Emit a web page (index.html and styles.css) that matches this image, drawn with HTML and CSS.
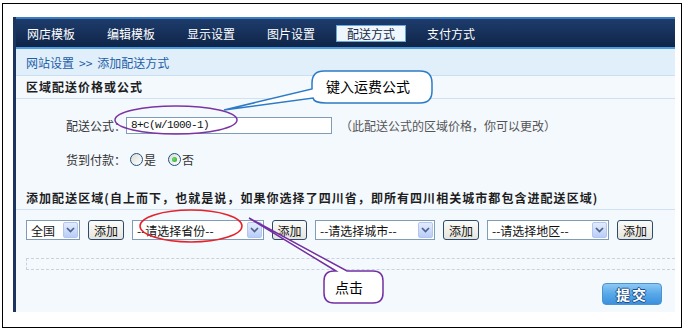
FILE: index.html
```html
<!DOCTYPE html>
<html lang="zh-CN">
<head>
<meta charset="utf-8">
<title>添加配送方式</title>
<link rel="stylesheet" href="styles.css">
</head>
<body>
<div class="frame">
  <div class="panel">
    <nav class="nav">
      <span class="nav-item">网店模板</span>
      <span class="nav-item">编辑模板</span>
      <span class="nav-item">显示设置</span>
      <span class="nav-item">图片设置</span>
      <span class="nav-item active">配送方式</span>
      <span class="nav-item">支付方式</span>
    </nav>
    <div class="crumb"><span>网站设置</span><span class="sep">&gt;&gt;</span><span>添加配送方式</span></div>
    <div class="sec-head">区域配送价格或公式</div>
    <div class="form">
      <div class="row row-formula">
        <span class="label">配送公式：</span>
        <div class="input">8+c(w/1000-1)</div>
        <span class="hint">（此配送公式的区域价格，你可以更改）</span>
      </div>
      <div class="row row-cod">
        <span class="label">货到付款：</span>
        <span class="radio"></span><span class="opt">是</span>
        <span class="radio on"></span><span class="opt">否</span>
      </div>
    </div>
    <div class="sec-head sec2">添加配送区域(自上而下，也就是说，如果你选择了四川省，即所有四川相关城市都包含进配送区域)</div>
    <div class="region-row">
      <div class="select w1"><span class="val">全国</span><span class="arrow"><svg width="9" height="6" viewBox="0 0 9 6"><path d="M1 1 L4.5 4.5 L8 1" stroke="#4d6185" stroke-width="1.7" fill="none"/></svg></span></div>
      <button class="add">添加</button>
      <div class="select w2"><span class="val">--请选择省份--</span><span class="arrow"><svg width="9" height="6" viewBox="0 0 9 6"><path d="M1 1 L4.5 4.5 L8 1" stroke="#4d6185" stroke-width="1.7" fill="none"/></svg></span></div>
      <button class="add b2">添加</button>
      <div class="select w3"><span class="val">--请选择城市--</span><span class="arrow"><svg width="9" height="6" viewBox="0 0 9 6"><path d="M1 1 L4.5 4.5 L8 1" stroke="#4d6185" stroke-width="1.7" fill="none"/></svg></span></div>
      <button class="add">添加</button>
      <div class="select w4"><span class="val">--请选择地区--</span><span class="arrow"><svg width="9" height="6" viewBox="0 0 9 6"><path d="M1 1 L4.5 4.5 L8 1" stroke="#4d6185" stroke-width="1.7" fill="none"/></svg></span></div>
      <button class="add">添加</button>
    </div>
    <div class="dashed"></div>
    <div class="actions"><button class="submit">提交</button></div>
  </div>
</div>
<svg class="annot" width="688" height="330" viewBox="0 0 688 330">
  <ellipse cx="176" cy="120" rx="61" ry="14" fill="none" stroke="#7b35a3" stroke-width="1.5"/>
  <ellipse cx="191" cy="226" rx="51" ry="16" fill="none" stroke="#e3232b" stroke-width="1.5"/>
  <path d="M324,71 H420 Q432,71 432,83 V91 Q432,103 420,103 H326 Q314,103 313,98 L224,110 L312,89 V83 Q312,71 324,71 Z" fill="#fff" stroke="#2b7bc6" stroke-width="1.5"/>
  <text x="326" y="92" class="bubble-text">键入运费公式</text>
  <path d="M336,271 L249,218 L347,271 H373 Q383,271 383,281 V293 Q383,303 373,303 H334 Q324,303 324,293 V281 Q324,271 334,271 Z" fill="#fff" stroke="#7230a2" stroke-width="1.5"/>
  <text x="335" y="293" class="bubble-text">点击</text>
</svg>
</body>
</html>
```

FILE: styles.css
```css
* { box-sizing: border-box; }

body {
  margin: 0;
  position: relative;
  width: 688px;
  height: 330px;
  overflow: hidden;
  background: #fff;
  font-family: "Noto Sans CJK SC", "Noto Sans", sans-serif;
  font-size: 12px;
  color: #222;
}

.frame {
  margin: 3px 0 0 2px;
  width: 680px;
  height: 325px;
  border: 1px solid #000;
  padding: 13px 0 0 10px;
}

.panel {
  width: 662px;
  height: 295px;
  background: #f4f9fe;
  border-left: 3px solid #1c3560;
  overflow: hidden;
}

.nav {
  height: 32px;
  border-top: 2px solid #3d7cc0;
  border-bottom: 2px solid #4e9de2;
  background: linear-gradient(#1d3c6c, #0f2548);
  display: flex;
  align-items: center;
  gap: 10px;
}

.nav-item {
  height: 17px;
  line-height: 15px;
  padding: 0 10px;
  border: 1px solid transparent;
  color: #fff;
  white-space: nowrap;
}

.nav-item.active {
  background: #eef6fe;
  border-color: #6aa6dc;
  color: #1a2a40;
}

.crumb {
  height: 27px;
  line-height: 27px;
  padding-left: 10px;
  background: #e1effb;
  border-bottom: 1px solid #cadff2;
  color: #1e5ea6;
}

.crumb .sep {
  margin: 0 5px;
}

.sec-head {
  height: 23px;
  line-height: 22px;
  padding-left: 10px;
  border-bottom: 1px solid #cfe1f2;
  font-weight: bold;
  letter-spacing: 1px;
  color: #1e1e1e;
  white-space: nowrap;
}

.form {
  padding-left: 50px;
}

.row {
  display: flex;
  align-items: center;
}

.label {
  color: #333;
}

.row-formula {
  margin-top: 18px;
  height: 17px;
}

.input {
  width: 206px;
  height: 17px;
  border: 1px solid #7f9db9;
  background: #fff;
  padding-left: 4px;
  line-height: 15px;
  font-family: "Liberation Mono", monospace;
  font-size: 11px;
  letter-spacing: -0.6px;
  color: #111;
}

.hint {
  margin-left: 8px;
  color: #555;
}

.row-cod {
  margin-top: 15px;
  height: 20px;
}

.radio {
  width: 13px;
  height: 13px;
  border-radius: 50%;
  border: 1px solid #1c5180;
  background: linear-gradient(135deg, #dcdcd6, #fff);
  margin-left: 4px;
  margin-right: 1px;
  position: relative;
}

.radio + .opt + .radio {
  margin-left: 12px;
}

.radio.on::after {
  content: "";
  position: absolute;
  left: 3px;
  top: 3px;
  width: 5px;
  height: 5px;
  border-radius: 50%;
  background: radial-gradient(circle at 40% 40%, #6fdc6f, #21a121);
}

.opt {
  color: #333;
}

.sec2 {
  margin-top: 17px;
  height: 24px;
  line-height: 23px;
  letter-spacing: 1.05px;
}

.region-row {
  margin-top: 10px;
  padding-left: 10px;
  height: 20px;
  display: flex;
  gap: 8px;
}

.select {
  height: 20px;
  border: 1px solid #7f9db9;
  background: #fff;
  display: flex;
  align-items: center;
  justify-content: space-between;
  padding: 0 1px 0 4px;
  color: #111;
  white-space: nowrap;
}

.w1 { width: 54px; }
.w2 { width: 132px; }
.w3 { width: 120px; }
.w4 { width: 122px; }

.arrow {
  width: 15px;
  height: 16px;
  border: 1px solid #b4c6ee;
  border-radius: 2px;
  background: linear-gradient(#e3ecfe, #b9cdf8);
  display: flex;
  align-items: center;
  justify-content: center;
}

.add {
  width: 36px;
  height: 20px;
  padding: 0;
  border: 1px solid #2b4a6e;
  border-radius: 3px;
  background: linear-gradient(#fbfbf8, #e6e4dc);
  font-family: inherit;
  font-size: 12px;
  line-height: 17px;
  color: #111;
}

.add.b2 { width: 35px; }

.dashed {
  margin-top: 18px;
  margin-left: 10px;
  height: 12px;
  border: 1px dashed #c9d2dc;
  border-right: none;
}

.actions {
  margin-top: 13px;
  display: flex;
  justify-content: flex-end;
  padding-right: 13px;
}

.submit {
  width: 60px;
  height: 22px;
  padding: 0;
  border: 1px solid #4a94d4;
  border-radius: 4px;
  background: linear-gradient(#8dc8f4, #56a8e8 50%, #3d91dc);
  font-family: inherit;
  font-size: 14px;
  font-weight: bold;
  letter-spacing: 2px;
  line-height: 20px;
  color: #fff;
  text-shadow: 1px 0 #1d4d86, -1px 0 #1d4d86, 0 1px #1d4d86, 0 -1px #1d4d86;
}

.annot {
  position: absolute;
  left: 0;
  top: 0;
  pointer-events: none;
}

.bubble-text {
  font-family: "Noto Sans CJK SC", sans-serif;
  font-size: 14px;
  fill: #000;
}
```
